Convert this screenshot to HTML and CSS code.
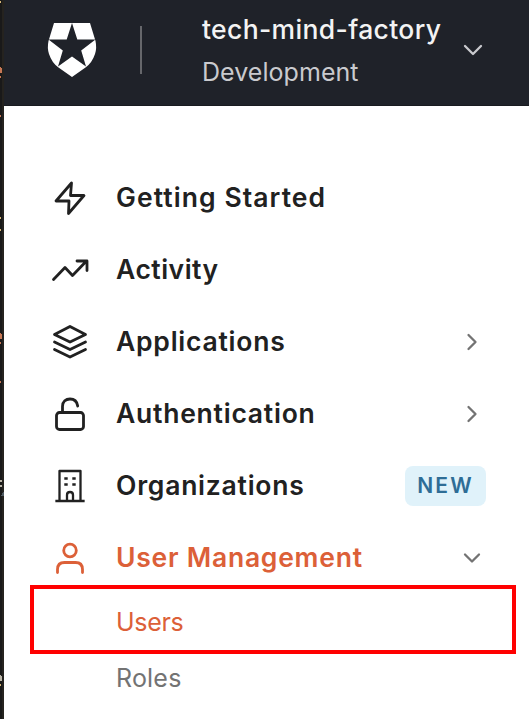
FILE: index.html
```html
<!DOCTYPE html>
<html lang="en">
<head>
<meta charset="utf-8">
<title>Dashboard</title>
<link rel="stylesheet" href="styles.css">
</head>
<body>
<div class="edge">
<svg width="4" height="719" viewBox="0 0 4 719">
<path fill="#25231f" d="M2 0h2v719h-2z"/>
<path fill="#d8b878" d="M0 1h1v2h-1zM0 217h1v2h-1zM0 229h1v2h-1z"/>
<path fill="#c77855" d="M0 67h1v1h1v5h-2zM0 76h1v2h-1zM0 115h1v2h-1zM0 333h1v1h1v5h-2zM0 342h1v2h-1zM0 381h1v2h-1z"/>
<path fill="#bab5a8" d="M0 480h2v2h-2zM0 485h2v2h-2zM0 675h1v1h1v5h-2z"/>
<path fill="#505b63" d="M3 492h1v4h-3v-1h1v-2h1z"/>
<path fill="#d8b878" d="M0 684h1v2h-1z"/>
</svg>
</div>
<div class="panel">
<header class="header">
<svg class="logo" width="50" height="55" viewBox="0 0 50 55"><path fill="#fff" d="M7 0H43L48.500 18Q50 25 48 31Q45 40 38.500 44.500L25 54L11.500 44.500Q5 40 2 31Q0 25 1.500 18Z"/><path fill="#1f2229" d="M25 0L30.300 16.500H48.500L34.200 27.500L39 43.500L25 33.500L11 43.500L15.800 27.500L1.500 16.500H19.700Z"/></svg>
<div class="divider"></div>
<div class="tenant"><div class="name"><span>tech-mind-factory</span></div><div class="env"><span>Development</span></div></div>
<svg class="chev light" width="24" height="24" viewBox="0 0 24 24"><path d="M4 8L12 16L20 8"/></svg>
</header>
<nav class="nav">
<div class="item"><svg class="icon" viewBox="0 0 40 40"><path d="M21.500 5L6 23H19L18.500 35.500L34 17.500H20.500Z"/></svg><span class="label l1">Getting Started</span></div>
<div class="item"><svg class="icon" viewBox="0 0 40 40"><path d="M3.500 29.500L15 17.500L22.500 25.500L36.500 11M27 11H37V20.500"/></svg><span class="label l2">Activity</span></div>
<div class="item"><svg class="icon" viewBox="0 0 40 40"><path d="M20 4.500L35.500 12.500L20 20L4.500 12.500ZM4.500 20L20 27.500L35.500 20M4.500 27.500L20 35L35.500 27.500"/></svg><span class="label">Applications</span><svg class="chev" width="24" height="24" viewBox="0 0 24 24"><path d="M8.500 5L15.500 12L8.500 19"/></svg></div>
<div class="item"><svg class="icon" viewBox="0 0 40 40"><rect x="6.500" y="18.500" width="27" height="17" rx="3"/><path d="M12.500 18V12.500C12.500 7.500 16 5 20 5C24 5 27 7.500 27.700 12"/></svg><span class="label">Authentication</span><svg class="chev" width="24" height="24" viewBox="0 0 24 24"><path d="M8.500 5L15.500 12L8.500 19"/></svg></div>
<div class="item"><svg class="icon building" viewBox="0 0 40 40"><path d="M9.500 34V5H30.500V34M6.500 35H33.500M17 34V29Q17 26 20 26Q23 26 23 29V34"/><path class="windows" d="M14.300 12.500H17.700M22.300 12.500H25.700M14.300 18.500H17.700M22.300 18.500H25.700"/></svg><span class="label">Organizations</span><span class="badge"><span>NEW</span></span></div>
<div class="item active"><svg class="icon" viewBox="0 0 40 40"><circle cx="20" cy="12.500" r="6.300"/><path d="M7.500 34.500V31.500Q7.500 24.500 14.500 24.500H25.500Q32.500 24.500 32.500 31.500V34.500"/></svg><span class="label">User Management</span><svg class="chev" width="24" height="24" viewBox="0 0 24 24"><path d="M5 8.500L12 15.500L19 8.500"/></svg></div>
<div class="sub selected"><span>Users</span></div>
<div class="sub roles"><span>Roles</span></div>
</nav>
</div>
</body>
</html>
```
FILE: styles.css
```css
* { box-sizing: border-box; }
body { margin: 0; width: 529px; height: 719px; overflow: hidden; display: flex; background: #fff; font-family: Inter, "Liberation Sans", sans-serif; color: #212121; }
.edge { width: 4px; height: 719px; background: #191919; flex: none; }
.edge svg, .icon, .logo, .chev { display: block; flex: none; }
.panel { width: 525px; }
.header { height: 106px; background: #1f2229; border-bottom: 1px solid #191b20; display: flex; align-items: flex-start; padding-left: 43px; }
.logo { margin-top: 23px; }
.divider { width: 2px; height: 48px; margin: 26px 0 0 43px; background: #66676b; }
.tenant { width: 319px; padding: 12px 0 0 60px; white-space: nowrap; }
.name { font-size: 26.5px; line-height: 34px; font-weight: 550; color: #f3f3f3; letter-spacing: .36px; }
.env { font-size: 25px; line-height: 36px; margin-top: 8px; color: #c9cace; letter-spacing: .05px; }
.chev { fill: none; stroke: #737373; stroke-width: 2.3; stroke-linecap: round; stroke-linejoin: round; }
.chev.light { margin-top: 38px; stroke: #c9cace; }
.nav { padding-top: 56px; }
.item { height: 72px; display: flex; align-items: center; padding: 0 45px 0 46px; }
.icon { width: 40px; height: 40px; fill: none; stroke: #212121; stroke-width: 2.8; stroke-linecap: round; stroke-linejoin: round; }
.building { stroke-width: 2.3; stroke-linecap: square; }
.windows { stroke-width: 2.6; stroke-linecap: butt; }
.active .icon { stroke: #dc6038; }
.label { margin-left: 26px; padding-bottom: 2px; flex: 1; font-size: 26.5px; line-height: 36px; font-weight: 600; letter-spacing: .76px; white-space: nowrap; }
.l1 { letter-spacing: 1.08px; }
.l2 { letter-spacing: .5px; }
.active { color: #dc6038; height: 63px; align-items: flex-start; }
.active .icon { margin-top: 16px; }
.active .label { margin-top: 17px; }
.active .chev { margin-top: 24px; }
.badge { width: 81px; height: 40px; margin-right: -2px; border-radius: 8px; background: #e0f2fa; color: #2e6d96; font-size: 21px; font-weight: 600; letter-spacing: 2.2px; display: flex; align-items: center; justify-content: center; padding-bottom: 1px; }
.sub { font-size: 25px; letter-spacing: .2px; }
.selected { width: 486px; height: 69px; margin-left: 26px; border: 4px solid #f00; padding-left: 82px; line-height: 66px; color: #dc6038; letter-spacing: -.3px; }
.roles { padding-left: 112px; line-height: 49px; color: #737373; }
```
